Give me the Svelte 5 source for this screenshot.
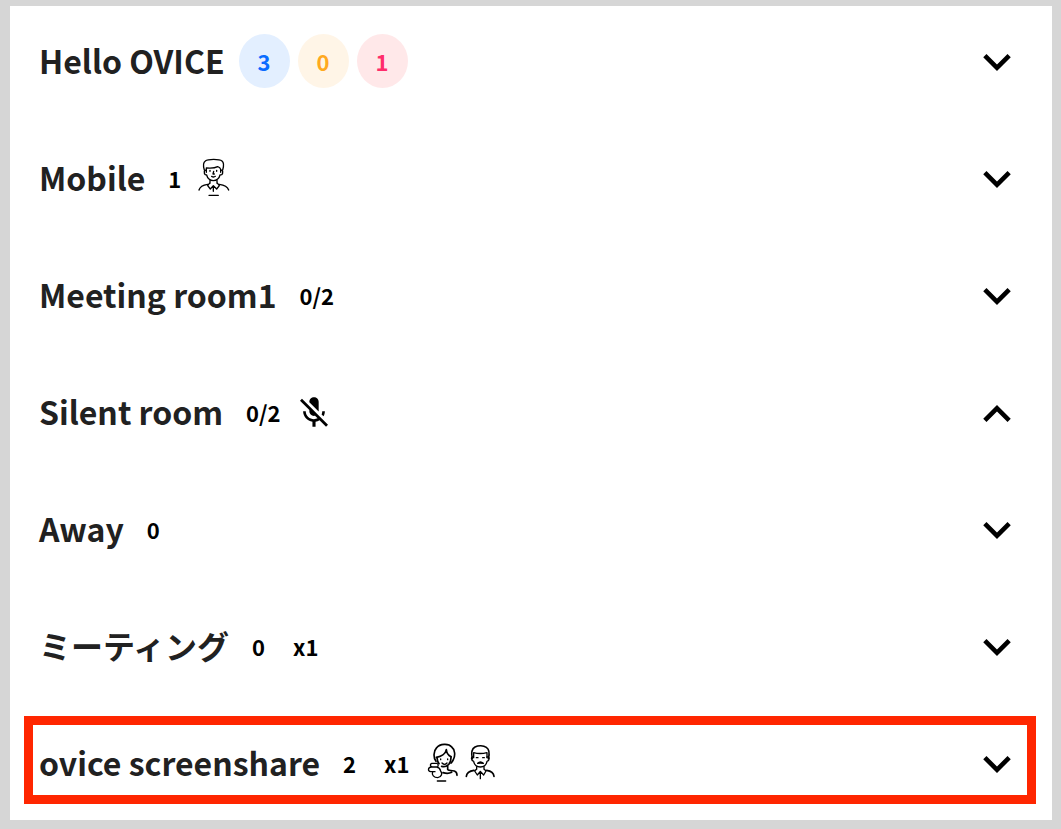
<script>
  let rooms = $state([
    { name: 'Hello OVICE', badges: [{ n: 3, tone: 'blue' }, { n: 0, tone: 'amber' }, { n: 1, tone: 'pink' }] },
    { name: 'Mobile', count: '1', people: ['man'] },
    { name: 'Meeting room1', count: '0/2' },
    { name: 'Silent room', count: '0/2', muted: true, open: true },
    { name: 'Away', count: '0' },
    { name: 'ミーティング', count: '0', extra: 'x1' },
    { name: 'ovice screenshare', count: '2', extra: 'x1', people: ['woman', 'elder'], selected: true }
  ]);
</script>

<main>
  <ul>
    {#each rooms as room}
      <li class:selected={room.selected}>
        <h2>{room.name}</h2>
        {#if room.badges}
          <div class="badges">
            {#each room.badges as badge}
              <span class="badge {badge.tone}">{badge.n}</span>
            {/each}
          </div>
        {/if}
        {#if room.count}<span class="count">{room.count}</span>{/if}
        {#if room.extra}<span class="extra">{room.extra}</span>{/if}
        {#if room.muted}
          <svg class="mic" viewBox="3 2 18 19" aria-hidden="true">
            <path d="M19 11h-1.7c0 .74-.16 1.43-.43 2.05l1.23 1.23c.56-.98.9-2.09.9-3.28zm-4.02.17c0-.06.02-.11.02-.17V5c0-1.66-1.34-3-3-3S9 3.34 9 5v.18l5.98 5.99zM4.27 3L3 4.27l6.01 6.01V11c0 1.66 1.33 3 2.99 3 .22 0 .44-.03.65-.08l1.66 1.66c-.71.33-1.5.52-2.31.52-2.76 0-5.3-2.1-5.3-5.1H5c0 3.41 2.72 6.23 6 6.72V21h2v-3.28c.91-.13 1.77-.45 2.54-.9L19.73 21 21 19.73 4.27 3z" />
          </svg>
        {/if}
        {#if room.people}
          <div class="people">
            {#each room.people as person}
              {#if person === 'man'}
                <svg class="avatar" viewBox="51 39 102 120" aria-hidden="true">
                  <path d="M70 75C66 62 66 53 73 48C79 43 88 43 98 43C109 43 117 43 123 48C129 53 129 62 125 75" />
                  <path d="M76 82V69C88 70 101 70 110 65C114 66 118 69 119 73V82" />
                  <path d="M75 76C69 73 68 85 73 89L77 90C79 99 87 107 97 107C107 107 115 99 117 90L122 89C127 85 126 73 120 76" />
                  <path d="M87 76v3M107 76v3M98 79l-2 8h4M92 94q6 4 11 0" />
                  <path d="M87 106v9M108 106v9M87 113l-7 9 8 10 9-10 10 10 8-10-7-9M97 124v15" />
                  <path d="M54 135C57 124 66 120 80 118M115 118C129 120 139 124 143 135" />
                  <path d="M84 151h28" />
                </svg>
              {:else if person === 'woman'}
                <svg class="avatar" viewBox="33 36 102 120" aria-hidden="true">
                  <path class="bold" d="M63 91C54 79 56 60 65 50C74 38 101 36 110 48C121 56 121 75 115 86C113 91 111 94 108 96" />
                  <path class="bold" d="M64 79C78 77 92 69 94 56C95 67 99 73 108 77" />
                  <path class="bold" d="M66 80C67 90 68 94 72 98M80 106C94 110 109 100 108 77" />
                  <path d="M77 84v2M98 84v2M81 96q8 8 15 0" />
                  <path d="M51 97H65C71 97 71 108 65 108H53C45 108 44 98 51 97M49 108C38 109 38 121 47 122H60M53 122C49 132 57 140 68 140C80 139 83 127 77 120C75 112 71 109 65 108" />
                  <path class="bold" d="M98 106v9C100 119 112 119 118 120C124 122 126 127 126 133M84 125C94 128 106 126 110 124" />
                  <path d="M67 150h25" />
                </svg>
              {:else}
                <svg class="avatar" viewBox="143 36 102 120" aria-hidden="true">
                  <path class="bold" d="M171 83C167 65 170 53 179 48C189 43 204 43 213 49C222 55 223 68 219 83" />
                  <path d="M175 80V65C186 68 203 68 215 65V80" />
                  <path d="M174 78C166 76 167 89 175 91C177 102 186 108 195 108C205 108 213 102 215 91C223 89 224 76 215 78" />
                  <path d="M183 80h5M202 80h5" />
                  <path class="fill" d="M187 97Q195 89 204 97Q195 95 187 97Z" />
                  <path d="M184 107v8M206 107v8M184 114l-6 6 8 12 9-11 10 11 7-12-6-6M195 124v19" />
                  <path class="bold" d="M153 136C154 125 161 120 176 118M214 118C228 120 235 125 236 136" />
                </svg>
              {/if}
            {/each}
          </div>
        {/if}
        <button aria-label="Toggle {room.name}" aria-expanded={!!room.open} onclick={() => (room.open = !room.open)}>
          <svg class="chevron" class:up={room.open} viewBox="6 8.59 12 7.41" aria-hidden="true">
            <path d="M7.41 8.59 12 13.17l4.59-4.58L18 10l-6 6-6-6z" />
          </svg>
        </button>
      </li>
    {/each}
  </ul>
</main>

<style>
  :global(body) {
    margin: 0;
    background: #d6d6d6;
  }
  main {
    padding: 6px 9px 9px 10px;
    font-family: "Noto Sans CJK JP", "Noto Sans", sans-serif;
    color: #000;
  }
  ul {
    display: flex;
    flex-direction: column;
    gap: 29px;
    margin: 0;
    padding: 8px 16px 16px 14px;
    list-style: none;
    background: #fff;
  }
  li {
    display: flex;
    align-items: center;
    box-sizing: border-box;
    height: 88px;
    padding: 6px 16px 0 6px;
    border: 9px solid transparent;
  }
  li.selected {
    border-color: #ff2600;
  }
  h2 {
    margin: 0;
    padding-bottom: 2px;
    font-size: 32px;
    line-height: 48px;
    font-weight: 700;
    color: #212121;
    white-space: nowrap;
  }
  .badges {
    display: flex;
    gap: 8px;
    margin-left: 14px;
  }
  .badge {
    display: flex;
    align-items: center;
    justify-content: center;
    width: 51px;
    height: 54px;
    border-radius: 50%;
    font-size: 22px;
    font-weight: 700;
  }
  .blue { background: #e3efff; color: #0a6cff; }
  .amber { background: #fff5e7; color: #ffa920; }
  .pink { background: #ffe8e9; color: #ff2d6b; }
  .count, .extra {
    margin-left: 23px;
    font-size: 22px;
    line-height: 32px;
    font-weight: 700;
  }
  .extra { margin-left: 28px; }
  .mic {
    width: 28px;
    height: 30px;
    margin-left: 19px;
  }
  .people {
    display: flex;
    gap: 3px;
    margin-left: 17px;
  }
  .avatar {
    width: 34px;
    height: 40px;
    fill: none;
    stroke: #000;
    stroke-width: 4;
    stroke-linecap: round;
    stroke-linejoin: round;
  }
  .bold { stroke-width: 5; }
  .fill { fill: #000; }
  button {
    display: flex;
    margin: 0 0 0 auto;
    padding: 3px 0 0;
    border: 0;
    background: none;
    cursor: pointer;
  }
  .chevron {
    width: 28px;
    height: 17px;
  }
  .up { transform: rotate(180deg); }
</style>
